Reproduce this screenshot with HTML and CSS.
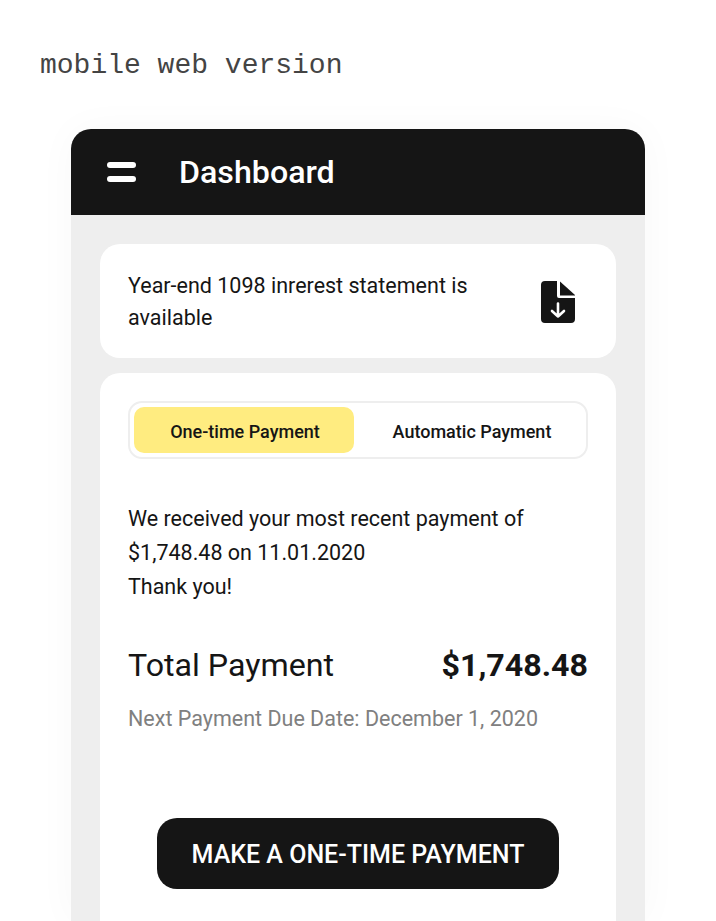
FILE: index.html
```html
<!DOCTYPE html>
<html>
  <head>
    <title>Mobile web version</title>
    <meta charset="utf-8" />
    <link rel="stylesheet" href="styles.css">
  </head>
  <body>
    <div class="caption">mobile web version</div>
    <div class="phone">
      <div class="topbar">
        <span class="menu-icon"><span></span><span></span></span>
        <h1>Dashboard</h1>
      </div>
      <div class="content">
        <div class="card notice">
          <p>Year-end 1098 inrerest statement is available</p>
          <svg class="doc-icon" width="36" height="44" viewBox="0 0 36 44">
            <path fill="#151515" d="M5 1h12v15a2 2 0 0 0 2 2h16v21a4 4 0 0 1-4 4H5a4 4 0 0 1-4-4V5a4 4 0 0 1 4-4z" />
            <path fill="#151515" d="M20 1.500 35 15v.500H20z" />
            <path fill="none" stroke="#fff" stroke-width="2.600" stroke-linecap="round" stroke-linejoin="round" d="M18 23.500v13M12 31l6 5.500 6-5.500" />
          </svg>
        </div>
        <div class="card payment">
          <div class="tabs">
            <div class="tab active">One-time Payment</div>
            <div class="tab">Automatic Payment</div>
          </div>
          <p class="message">We received your most recent payment of<br />$1,748.48 on 11.01.2020<br />Thank you!</p>
          <div class="total">
            <span class="total-label">Total Payment</span>
            <span class="total-amount">$1,748.48</span>
          </div>
          <div class="due">Next Payment Due Date: December 1, 2020</div>
          <button class="pay-btn">MAKE A ONE-TIME PAYMENT</button>
        </div>
      </div>
    </div>
  </body>
</html>
```
FILE: styles.css
```css
html,
body {
	margin: 0;
	padding: 0;
	height: 921px;
	overflow: hidden;
	background: #fff;
}

body {
	font-family: Roboto, Arial, sans-serif;
	color: #151515;
}

.caption {
	font-family: "Liberation Mono", monospace;
	font-size: 28px;
	line-height: 32px;
	color: #444;
	padding: 50px 0 0 40px;
}

/* Phone frame */

.phone {
	width: 574px;
	margin: 47px 0 0 71px;
	border-radius: 20px 20px 0 0;
	box-shadow: 0 0 40px rgba(0, 0, 0, 0.03);
}

.topbar {
	display: flex;
	align-items: center;
	height: 86px;
	padding-left: 36px;
	background: #151515;
	border-radius: 20px 20px 0 0;
}

.topbar h1 {
	margin: 0 0 0 43px;
	font-size: 32.200px;
	font-weight: 500;
	color: #fff;
}

.menu-icon {
	display: flex;
	flex-direction: column;
	gap: 8px;
	width: 29px;
}

.menu-icon span {
	display: block;
	height: 6px;
	border-radius: 3px;
	background: #fff;
}

.content {
	display: flex;
	flex-direction: column;
	gap: 15px;
	height: 706px;
	padding: 29px 29px 0;
	background: #eee;
	box-sizing: border-box;
}

.card {
	background: #fff;
	border-radius: 20px;
}

.notice {
	display: flex;
	align-items: center;
	justify-content: space-between;
	height: 114px;
	padding: 0 40px 0 28px;
	box-sizing: border-box;
}

.notice p {
	margin: 2px 0 0;
	width: 370px;
	font-size: 21.500px;
	line-height: 32.500px;
}

.doc-icon {
	margin-top: 1px;
}

/* Payment card */

.payment {
	flex: 1;
	padding: 28px 28px 0;
	border-radius: 20px 20px 0 0;
}

.tabs {
	display: grid;
	grid-template-columns: 1fr 1fr;
	gap: 8px;
	height: 58px;
	padding: 4px;
	border: 2px solid #eee;
	border-radius: 14px;
	box-sizing: border-box;
}

.tab {
	display: flex;
	align-items: center;
	justify-content: center;
	padding-top: 2px;
	font-size: 18px;
	font-weight: 500;
	border-radius: 10px;
}

.tab.active {
	padding-left: 2px;
	background: #ffec80;
}

.message {
	margin: 43px 0 0;
	font-size: 21.500px;
	line-height: 34px;
}

.total {
	display: flex;
	align-items: center;
	justify-content: space-between;
	margin-top: 42px;
}

.total-label {
	font-size: 32.200px;
}

.total-amount {
	font-size: 32.200px;
	font-weight: 700;
}

.due {
	margin-top: 22px;
	font-size: 21.500px;
	color: #808080;
}

.pay-btn {
	display: block;
	width: 402px;
	height: 71px;
	margin: 87px auto 0;
	padding: 2px 0 0;
	border: none;
	border-radius: 20px;
	background: #151515;
	color: #fff;
	font-family: Roboto, Arial, sans-serif;
	font-size: 25px;
	font-weight: 500;
}
```
